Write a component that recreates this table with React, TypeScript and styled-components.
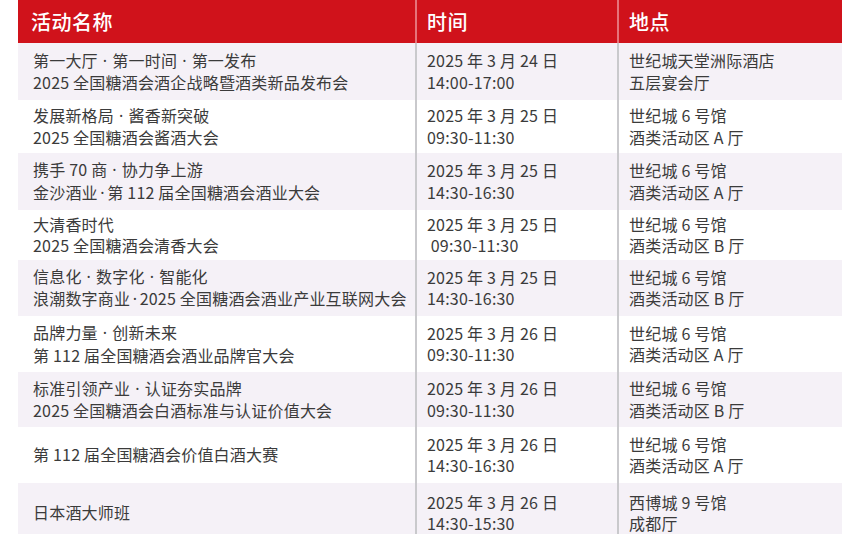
import styled, { createGlobalStyle } from 'styled-components'

const GlobalStyle = createGlobalStyle`
    html, body {
        margin: 0;
        padding: 0;
        background: #ffffff;
    }
    body {
        font-family: "Noto Sans CJK SC", "Noto Sans", sans-serif;
        color: #3b3b3b;
    }
`

const colors = {
    RED: '#d0121b',
    HEADER_LINE: '#e6737a',
    LAVENDER: '#f5f1f7',
    DIVIDER: '#c9c9cc',
    TEXT: '#3b3b3b',
}

const Page = styled.div`
    padding-left: 18px;
    width: 842px;
    box-sizing: border-box;
    overflow: hidden;
`

const Table = styled.div`
    display: flex;
    flex-direction: column;
    width: 100%;
`

const HeaderRow = styled.div`
    display: grid;
    grid-template-columns: 397px 202px 1fr;
    height: 43px;
    background: ${colors.RED};
`

const HeaderCell = styled.div<{ $first?: boolean }>`
    display: flex;
    align-items: center;
    padding-left: ${p => p.$first ? '13px' : '10px'};
    border-left: ${p => p.$first ? 'none' : `2px solid ${colors.HEADER_LINE}`};
    color: #ffffff;
    font-size: 20px;
    font-weight: 500;
    letter-spacing: 0.5px;
`

const Row = styled.div<{ $shaded: boolean; $h: number }>`
    display: grid;
    grid-template-columns: 397px 202px 1fr;
    height: ${p => p.$h}px;
    background: ${p => p.$shaded ? colors.LAVENDER : '#ffffff'};
`

const Cell = styled.div<{ $first?: boolean }>`
    display: flex;
    flex-direction: column;
    justify-content: center;
    padding-left: ${p => p.$first ? '15px' : '10px'};
    border-left: ${p => p.$first ? 'none' : `2px solid ${colors.DIVIDER}`};
    font-size: 16px;
    line-height: 21.5px;
    letter-spacing: 0.2px;
    color: ${colors.TEXT};
    white-space: pre;
`

// the separator dot is half width in the reference, so take it from a latin font
const Dot = styled.span<{ $spaced?: boolean }>`
    font-family: "Noto Sans", "DejaVu Sans", sans-serif;
    margin: 0 ${p => p.$spaced ? '5px' : '2.5px'};
`

type Event = {
    name: string[]
    time: string[]
    place: string[]
    h: number
}

const events: Event[] = [
    { name: ['第一大厅 · 第一时间 · 第一发布', '2025 全国糖酒会酒企战略暨酒类新品发布会'], time: ['2025 年 3 月 24 日', '14:00-17:00'], place: ['世纪城天堂洲际酒店', '五层宴会厅'], h: 57 },
    { name: ['发展新格局 · 酱香新突破', '2025 全国糖酒会酱酒大会'], time: ['2025 年 3 月 25 日', '09:30-11:30'], place: ['世纪城 6 号馆', '酒类活动区 A 厅'], h: 53 },
    { name: ['携手 70 商 · 协力争上游', '金沙酒业·第 112 届全国糖酒会酒业大会'], time: ['2025 年 3 月 25 日', '14:30-16:30'], place: ['世纪城 6 号馆', '酒类活动区 A 厅'], h: 57 },
    { name: ['大清香时代', '2025 全国糖酒会清香大会'], time: ['2025 年 3 月 25 日', ' 09:30-11:30'], place: ['世纪城 6 号馆', '酒类活动区 B 厅'], h: 50 },
    { name: ['信息化 · 数字化 · 智能化', '浪潮数字商业·2025 全国糖酒会酒业产业互联网大会'], time: ['2025 年 3 月 25 日', '14:30-16:30'], place: ['世纪城 6 号馆', '酒类活动区 B 厅'], h: 56 },
    { name: ['品牌力量 · 创新未来', '第 112 届全国糖酒会酒业品牌官大会'], time: ['2025 年 3 月 26 日', '09:30-11:30'], place: ['世纪城 6 号馆', '酒类活动区 A 厅'], h: 56 },
    { name: ['标准引领产业 · 认证夯实品牌', '2025 全国糖酒会白酒标准与认证价值大会'], time: ['2025 年 3 月 26 日', '09:30-11:30'], place: ['世纪城 6 号馆', '酒类活动区 B 厅'], h: 55 },
    { name: ['第 112 届全国糖酒会价值白酒大赛'], time: ['2025 年 3 月 26 日', '14:30-16:30'], place: ['世纪城 6 号馆', '酒类活动区 A 厅'], h: 56 },
    { name: ['日本酒大师班'], time: ['2025 年 3 月 26 日', '14:30-15:30'], place: ['西博城 9 号馆', '成都厅'], h: 60 },
]

// " · " gets a wider gap than a bare "·"
const Tight = ({ text }: { text: string }) => (
    <>
        {text.split('·').map((p, i) => (
            <span key={i}>
                {i > 0 && <Dot>·</Dot>}
                {p}
            </span>
        ))}
    </>
)

const Line = ({ text }: { text: string }) => (
    <span>
        {text.split(' · ').map((p, i) => (
            <span key={i}>
                {i > 0 && <Dot $spaced>·</Dot>}
                <Tight text={p} />
            </span>
        ))}
    </span>
)

const Lines = ({ lines }: { lines: string[] }) => (
    <>
        {lines.map((l, i) => <Line key={i} text={l} />)}
    </>
)

const App = () => {
    return (
        <Page>
            <GlobalStyle />
            <Table>
                <HeaderRow>
                    <HeaderCell $first>活动名称</HeaderCell>
                    <HeaderCell>时间</HeaderCell>
                    <HeaderCell>地点</HeaderCell>
                </HeaderRow>
                {events.map((ev, i) => (
                    <Row key={i} $shaded={i % 2 === 0} $h={ev.h}>
                        <Cell $first><Lines lines={ev.name} /></Cell>
                        <Cell><Lines lines={ev.time} /></Cell>
                        <Cell><Lines lines={ev.place} /></Cell>
                    </Row>
                ))}
            </Table>
        </Page>
    )
}

export default App
